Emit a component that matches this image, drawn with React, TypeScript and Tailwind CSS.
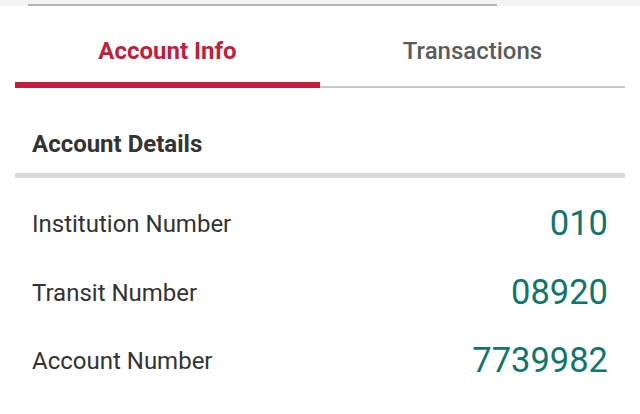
import React from 'react';

const rows = [
  { label: 'Institution Number', value: '010' },
  { label: 'Transit Number', value: '08920' },
  { label: 'Account Number', value: '7739982' },
];

export default function App() {
  return (
    <div className="w-[640px] h-[414px] bg-white overflow-hidden font-['Roboto',sans-serif]">
      {/* top strip */}
      <div className="h-[6px] bg-[#f3f3f3] flex items-end">
        <div className="ml-[28px] w-[469px] h-[2px] bg-[#b4b4b4]" />
      </div>

      <div className="px-[15px]">
        {/* tabs */}
        <div className="flex">
          <div className="flex-1 flex flex-col">
            <div className="h-[76px] flex items-center justify-center pt-[14px] text-[24px] font-bold text-[#c21f3e]">
              Account Info
            </div>
            <div className="h-[6px] bg-[#c21f3e]" />
          </div>
          <div className="flex-1 flex flex-col">
            <div className="h-[76px] flex items-center justify-center pt-[14px] text-[24px] font-medium text-[#5b5b5b]">
              Transactions
            </div>
            <div className="h-[6px] flex items-end">
              <div className="w-full h-[2px] bg-[#c8c8c8]" />
            </div>
          </div>
        </div>

        {/* section header */}
        <div className="h-[85px] flex items-center pl-[17px] pt-[26px] text-[24px] font-bold text-[#333333]">
          Account Details
        </div>
        <div className="h-[5px] bg-[#d8d8d8]" />

        {/* rows */}
        <div className="flex flex-col pt-[12px]">
          {rows.map((r) => (
            <div key={r.label} className="h-[68.5px] flex items-center justify-between pl-[17px] pr-[17px]">
              <span className="text-[24px] text-[#333333]">{r.label}</span>
              <span className="text-[34.5px] text-[#12756a]">{r.value}</span>
            </div>
          ))}
        </div>
      </div>
    </div>
  );
}
